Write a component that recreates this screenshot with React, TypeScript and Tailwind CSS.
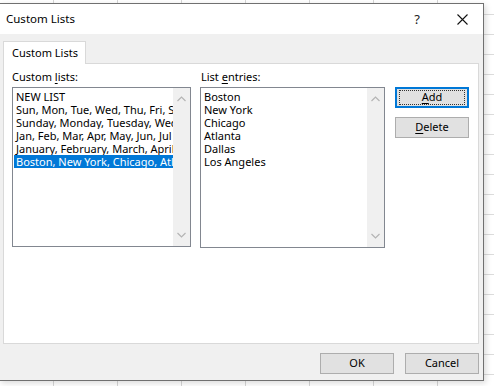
import React from "react";

const font = { fontFamily: '"Noto Sans", "Segoe UI", sans-serif' };

function Chevron({ up }: { up?: boolean }) {
  return (
    <svg width="9" height="6" viewBox="0 0 9 6" className="block">
      <polyline
        points={up ? "0.5,5 4.5,1 8.5,5" : "0.5,1 4.5,5 8.5,1"}
        fill="none"
        stroke="#b4b4b4"
        strokeWidth="1.2"
      />
    </svg>
  );
}

function ScrollBar() {
  return (
    <div className="w-[17px] h-full bg-[#f0f0f0] flex flex-col items-center justify-between py-[8px]">
      <Chevron up />
      <Chevron />
    </div>
  );
}

function Btn({ children, focused }: { children: React.ReactNode; focused?: boolean }) {
  return (
    <div
      className={
        "w-[74px] h-[21px] bg-[#e1e1e1] flex items-center justify-center text-[11px] text-black " +
        (focused ? "border-2 border-[#0078d7]" : "border border-[#adadad]")
      }
    >
      {focused ? (
        <div className="w-[66px] h-[15px] border border-dotted border-[#333] flex items-center justify-center">
          {children}
        </div>
      ) : (
        children
      )}
    </div>
  );
}

export default function App() {
  const lists = [
    "NEW LIST",
    "Sun, Mon, Tue, Wed, Thu, Fri, Sat",
    "Sunday, Monday, Tuesday, Wednesday",
    "Jan, Feb, Mar, Apr, May, Jun, Jul",
    "January, February, March, April",
    "Boston, New York, Chicago, Atlanta",
  ];
  const entries = ["Boston", "New York", "Chicago", "Atlanta", "Dallas", "Los Angeles"];
  return (
    <div
      className="w-[494px] h-[386px] overflow-hidden bg-white bg-[linear-gradient(to_right,#d6d6d6_1px,transparent_1px),linear-gradient(to_bottom,#dcdcdc_1px,transparent_1px)] bg-[size:64px_20px] bg-[position:53px_14px] pt-[3px]"
      style={font}
    >
      <div className="-ml-px w-[485px] h-[378px] border border-[#707070] bg-[#f0f0f0] flex flex-col shadow-[2px_2px_6px_rgba(0,0,0,0.15)]">
        {/* title bar */}
        <div className="h-[30px] bg-white flex items-center shrink-0">
          <div className="pl-[6px] text-[11.5px] text-black flex-1 leading-none">Custom Lists</div>
          <div className="text-[13px] text-[#222] w-[20px] mr-[30px] text-center leading-none">?</div>
          <svg width="11" height="11" viewBox="0 0 11 11" className="mr-[15px]">
            <path d="M0.5 0.5 L10.5 10.5 M10.5 0.5 L0.5 10.5" stroke="#111" strokeWidth="1.1" />
          </svg>
        </div>
        {/* body */}
        <div className="flex-1 pt-[7px] pl-[3px] flex flex-col">
          <div className="w-[83px] h-[23px] bg-white border border-b-0 border-[#d9d9d9] flex items-center pl-[8px] text-[11px] text-black -mb-px relative z-10">
            Custom Lists
          </div>
          <div className="w-[476px] h-[281px] bg-white border border-[#d9d9d9] flex pl-[8px] pt-[6px]">
            {/* column 1 */}
            <div className="w-[179px] flex flex-col">
              <div className="h-[17px] text-[11px] text-black leading-[14px]">
                Custom <span className="underline underline-offset-2">l</span>ists:
              </div>
              <div className="w-[179px] h-[160px] border border-[#828790] flex">
                <div className="flex-1 overflow-hidden pt-[2px] pl-px">
                  {lists.map((t, i) => (
                    <div
                      key={i}
                      className={
                        "h-[13px] leading-[13px] text-[11px] whitespace-nowrap overflow-hidden pl-[2px] " +
                        (i === 5 ? "bg-[#0078d7] text-white" : "text-black")
                      }
                    >
                      {t}
                    </div>
                  ))}
                </div>
                <ScrollBar />
              </div>
            </div>
            {/* column 2 */}
            <div className="w-[185px] ml-[9px] flex flex-col">
              <div className="h-[17px] text-[11px] text-black leading-[14px] pl-px">
                List <span className="underline underline-offset-2">e</span>ntries:
              </div>
              <div className="w-[185px] h-[161px] border border-[#828790] flex">
                <div className="flex-1 overflow-hidden pt-[2px] pl-[3px]">
                  {entries.map((t, i) => (
                    <div key={i} className="h-[13px] leading-[13px] text-[11px] text-black whitespace-nowrap">
                      {t}
                    </div>
                  ))}
                </div>
                <ScrollBar />
              </div>
            </div>
            {/* buttons */}
            <div className="ml-[10px] pt-[17px] flex flex-col gap-[9px]">
              <Btn focused>
                <span>
                  <span className="underline underline-offset-2">A</span>dd
                </span>
              </Btn>
              <Btn>
                <span>
                  <span className="underline underline-offset-2">D</span>elete
                </span>
              </Btn>
            </div>
          </div>
          {/* footer */}
          <div className="flex justify-end gap-[11px] pr-[4px] pt-[9px]">
            <Btn>OK</Btn>
            <Btn>Cancel</Btn>
          </div>
        </div>
      </div>
    </div>
  );
}
